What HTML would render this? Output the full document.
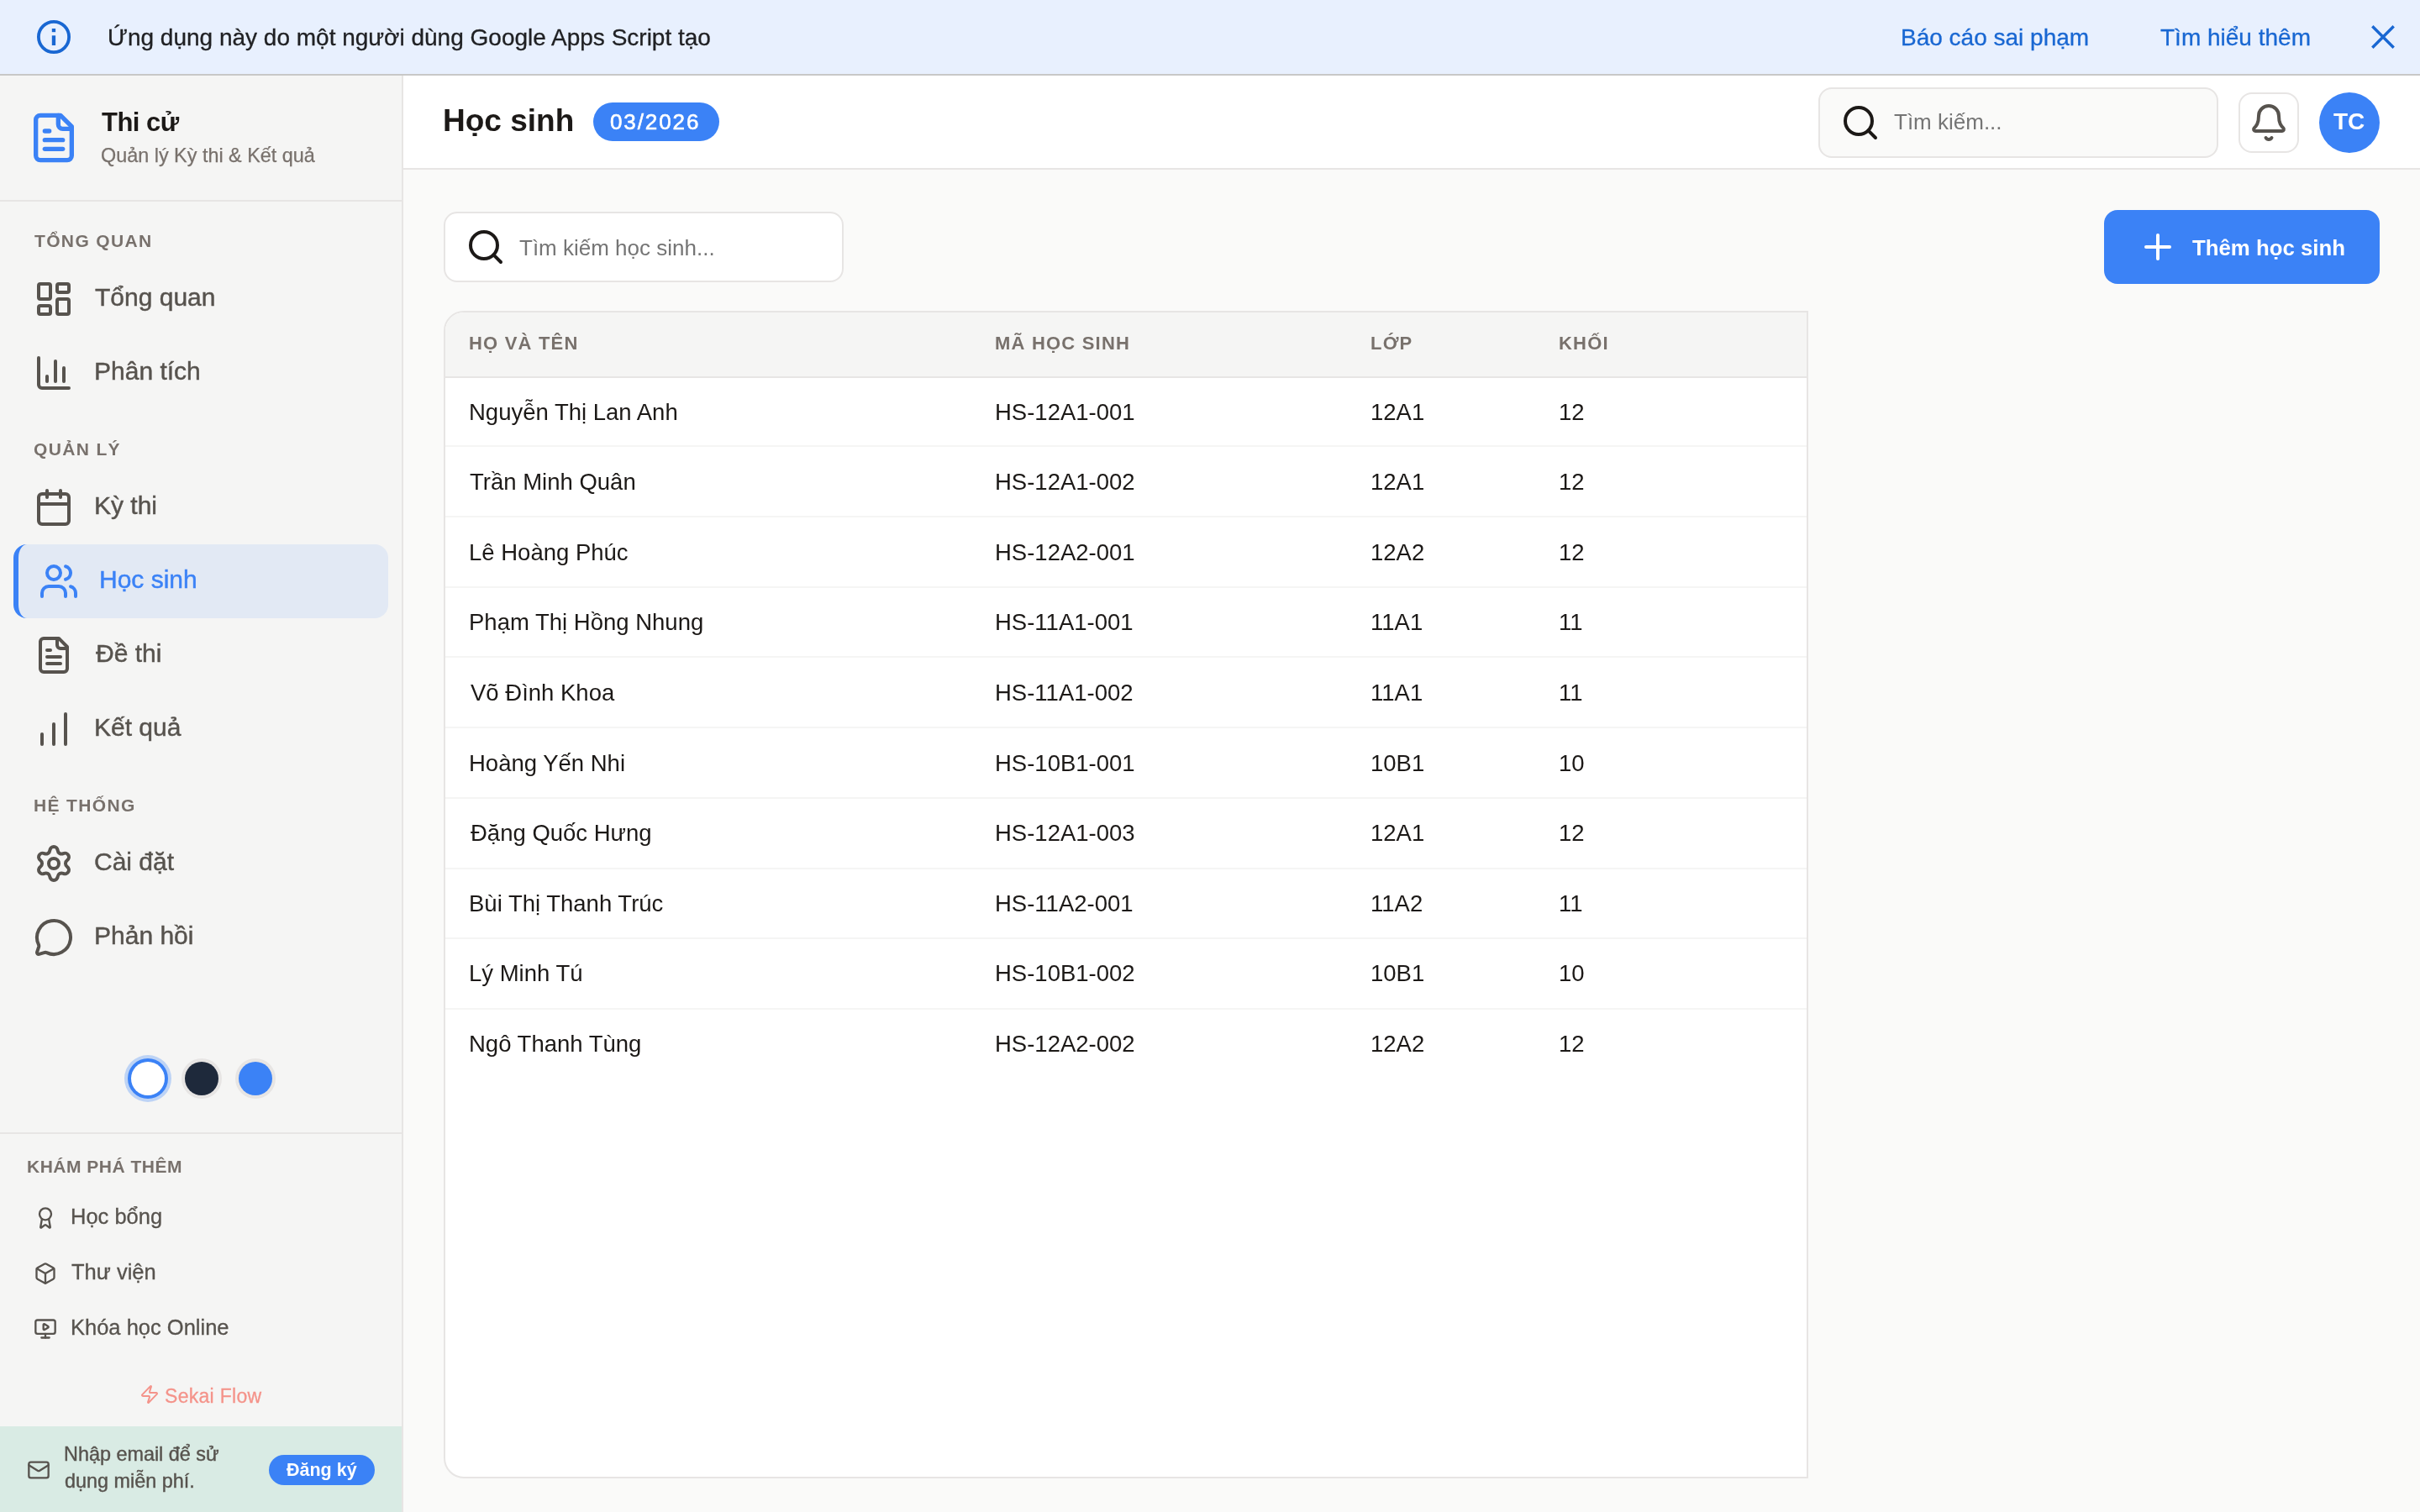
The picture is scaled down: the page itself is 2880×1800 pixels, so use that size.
<!DOCTYPE html>
<html><head><meta charset="utf-8"><style>
html,body{margin:0;padding:0;width:2880px;height:1800px;overflow:hidden;background:#fafaf9}
@media (max-width:2000px){html{zoom:0.5}}
body{position:relative;font-family:"Liberation Sans",sans-serif}
.t{position:absolute;white-space:nowrap;font-family:"Liberation Sans",sans-serif;-webkit-font-smoothing:antialiased;will-change:transform}
</style></head><body>
<div style="position:absolute;left:0px;top:0px;width:2880px;height:88px;background:#e8f0fe"></div>
<div style="position:absolute;left:0px;top:88px;width:2880px;height:2px;background:#c8c8c7"></div>
<div style="position:absolute;left:0px;top:90px;width:478px;height:1710px;background:#f5f5f4"></div>
<div style="position:absolute;left:478px;top:90px;width:2px;height:1710px;background:#e7e5e4"></div>
<div style="position:absolute;left:0px;top:238px;width:478px;height:2px;background:#e7e5e4"></div>
<div style="position:absolute;left:480px;top:90px;width:2400px;height:110px;background:#ffffff"></div>
<div style="position:absolute;left:480px;top:200px;width:2400px;height:2px;background:#e7e5e4"></div>
<div style="position:absolute;left:480px;top:202px;width:2400px;height:1598px;background:#fafaf9"></div>
<svg style="position:absolute;left:40px;top:20px" width="48" height="48" viewBox="0 0 48 48"><circle cx="24" cy="24" r="18.1" fill="none" stroke="#1967d2" stroke-width="3.8"/><rect x="21.8" y="14" width="4.3" height="4.2" fill="#1967d2"/><rect x="21.8" y="22.3" width="4.3" height="11.7" fill="#1967d2"/></svg>
<div class="t" style="left:127.84px;top:31.10px;font-size:28px;line-height:28px;color:#202124;font-weight:400;letter-spacing:0px;-webkit-text-stroke:0.3px #202124;">Ứng dụng này do một người dùng Google Apps Script tạo</div>
<div class="t" style="left:2262.20px;top:30.90px;font-size:28px;line-height:28px;color:#1967d2;font-weight:400;letter-spacing:0px;-webkit-text-stroke:0.3px #1967d2;">Báo cáo sai phạm</div>
<div class="t" style="left:2570.77px;top:30.90px;font-size:28px;line-height:28px;color:#1967d2;font-weight:400;letter-spacing:0px;-webkit-text-stroke:0.3px #1967d2;">Tìm hiểu thêm</div>
<svg style="position:absolute;left:2816px;top:24px" width="40" height="40" viewBox="0 0 40 40"><path d="M7.3 7.3L32.7 32.7M32.7 7.3L7.3 32.7" stroke="#1967d2" stroke-width="3.4" fill="none"/></svg>
<svg style="position:absolute;left:32.00px;top:132.00px" width="64" height="64" viewBox="0 0 24 24" fill="none" stroke="#3b82f6" stroke-width="2" stroke-linecap="round" stroke-linejoin="round" ><path d="M15 2H6a2 2 0 0 0-2 2v16a2 2 0 0 0 2 2h12a2 2 0 0 0 2-2V7Z"/><path d="M14 2v4a2 2 0 0 0 2 2h4"/><path d="M10 9H8"/><path d="M16 13H8"/><path d="M16 17H8"/></svg>
<div class="t" style="left:120.65px;top:130.16px;font-size:31px;line-height:31px;color:#1c1917;font-weight:700;letter-spacing:-0.5px;">Thi cử</div>
<div class="t" style="left:119.89px;top:174.19px;font-size:23.4px;line-height:23.4px;color:#78716c;font-weight:400;letter-spacing:0px;-webkit-text-stroke:0.25px #78716c;">Quản lý Kỳ thi &amp; Kết quả</div>
<div class="t" style="left:40.96px;top:276.42px;font-size:21px;line-height:21px;color:#78716c;font-weight:700;letter-spacing:1.35px;">TỔNG QUAN</div>
<svg style="position:absolute;left:40.00px;top:332.00px" width="48" height="48" viewBox="0 0 24 24" fill="none" stroke="#57534e" stroke-width="2" stroke-linecap="round" stroke-linejoin="round" ><rect width="7" height="9" x="3" y="3" rx="1"/><rect width="7" height="5" x="14" y="3" rx="1"/><rect width="7" height="9" x="14" y="12" rx="1"/><rect width="7" height="5" x="3" y="16" rx="1"/></svg>
<div class="t" style="left:113.33px;top:338.81px;font-size:30px;line-height:30px;color:#57534e;font-weight:400;letter-spacing:0px;-webkit-text-stroke:0.45px #57534e;">Tổng quan</div>
<svg style="position:absolute;left:40.00px;top:420.00px" width="48" height="48" viewBox="0 0 24 24" fill="none" stroke="#57534e" stroke-width="2" stroke-linecap="round" stroke-linejoin="round" ><path d="M3 3v16a2 2 0 0 0 2 2h16"/><path d="M18 17V9"/><path d="M13 17V5"/><path d="M8 17v-3"/></svg>
<div class="t" style="left:111.54px;top:426.81px;font-size:30px;line-height:30px;color:#57534e;font-weight:400;letter-spacing:0px;-webkit-text-stroke:0.45px #57534e;">Phân tích</div>
<div class="t" style="left:39.84px;top:523.92px;font-size:21px;line-height:21px;color:#78716c;font-weight:700;letter-spacing:1.35px;">QUẢN LÝ</div>
<svg style="position:absolute;left:40.00px;top:580.00px" width="48" height="48" viewBox="0 0 24 24" fill="none" stroke="#57534e" stroke-width="2" stroke-linecap="round" stroke-linejoin="round" ><path d="M8 2v4"/><path d="M16 2v4"/><rect width="18" height="18" x="3" y="4" rx="2"/><path d="M3 10h18"/></svg>
<div class="t" style="left:111.54px;top:586.81px;font-size:30px;line-height:30px;color:#57534e;font-weight:400;letter-spacing:0px;-webkit-text-stroke:0.45px #57534e;">Kỳ thi</div>
<div style="position:absolute;left:16px;top:648px;width:446px;height:88px;background:#e2e9f4;border-radius:16px;border-left:6px solid #3b82f6;box-sizing:border-box"></div>
<svg style="position:absolute;left:46.00px;top:668.00px" width="48" height="48" viewBox="0 0 24 24" fill="none" stroke="#3b82f6" stroke-width="2" stroke-linecap="round" stroke-linejoin="round" ><path d="M16 21v-2a4 4 0 0 0-4-4H6a4 4 0 0 0-4 4v2"/><circle cx="9" cy="7" r="4"/><path d="M22 21v-2a4 4 0 0 0-3-3.87"/><path d="M16 3.13a4 4 0 0 1 0 7.75"/></svg>
<div class="t" style="left:117.54px;top:674.81px;font-size:30px;line-height:30px;color:#3b82f6;font-weight:400;letter-spacing:0px;-webkit-text-stroke:0.45px #3b82f6;">Học sinh</div>
<svg style="position:absolute;left:40.00px;top:756.00px" width="48" height="48" viewBox="0 0 24 24" fill="none" stroke="#57534e" stroke-width="2" stroke-linecap="round" stroke-linejoin="round" ><path d="M15 2H6a2 2 0 0 0-2 2v16a2 2 0 0 0 2 2h12a2 2 0 0 0 2-2V7Z"/><path d="M14 2v4a2 2 0 0 0 2 2h4"/><path d="M10 9H8"/><path d="M16 13H8"/><path d="M16 17H8"/></svg>
<div class="t" style="left:113.79px;top:762.81px;font-size:30px;line-height:30px;color:#57534e;font-weight:400;letter-spacing:0px;-webkit-text-stroke:0.45px #57534e;">Đề thi</div>
<svg style="position:absolute;left:40.00px;top:844.00px" width="48" height="48" viewBox="0 0 24 24" fill="none" stroke="#57534e" stroke-width="2" stroke-linecap="round" stroke-linejoin="round" ><path d="M5 21v-6"/><path d="M12 21V9"/><path d="M19 21V3"/></svg>
<div class="t" style="left:111.54px;top:850.81px;font-size:30px;line-height:30px;color:#57534e;font-weight:400;letter-spacing:0px;-webkit-text-stroke:0.45px #57534e;">Kết quả</div>
<div class="t" style="left:39.60px;top:947.82px;font-size:21px;line-height:21px;color:#78716c;font-weight:700;letter-spacing:1.35px;">HỆ THỐNG</div>
<svg style="position:absolute;left:40.00px;top:1004.00px" width="48" height="48" viewBox="0 0 24 24" fill="none" stroke="#57534e" stroke-width="2" stroke-linecap="round" stroke-linejoin="round" ><path d="M9.671 4.136a2.34 2.34 0 0 1 4.659 0 2.34 2.34 0 0 0 3.319 1.915 2.34 2.34 0 0 1 2.33 4.033 2.34 2.34 0 0 0 0 3.831 2.34 2.34 0 0 1-2.33 4.033 2.34 2.34 0 0 0-3.319 1.915 2.34 2.34 0 0 1-4.659 0 2.34 2.34 0 0 0-3.32-1.915 2.34 2.34 0 0 1-2.33-4.033 2.34 2.34 0 0 0 0-3.831A2.34 2.34 0 0 1 6.35 6.051a2.34 2.34 0 0 0 3.319-1.915"/><circle cx="12" cy="12" r="3"/></svg>
<div class="t" style="left:112.48px;top:1010.81px;font-size:30px;line-height:30px;color:#57534e;font-weight:400;letter-spacing:0px;-webkit-text-stroke:0.45px #57534e;">Cài đặt</div>
<svg style="position:absolute;left:40.00px;top:1092.00px" width="48" height="48" viewBox="0 0 24 24" fill="none" stroke="#57534e" stroke-width="2" stroke-linecap="round" stroke-linejoin="round" ><path d="M2.992 16.342a2 2 0 0 1 .094 1.167l-1.065 3.29a1 1 0 0 0 1.236 1.168l3.413-.998a2 2 0 0 1 1.099.092 10 10 0 1 0-4.777-4.719"/></svg>
<div class="t" style="left:111.54px;top:1098.81px;font-size:30px;line-height:30px;color:#57534e;font-weight:400;letter-spacing:0px;-webkit-text-stroke:0.45px #57534e;">Phản hồi</div>
<svg style="position:absolute;left:144px;top:1252px" width="192" height="64" viewBox="0 0 192 64"><circle cx="32" cy="32" r="28" fill="#bdd3f5"/><circle cx="32" cy="32" r="24" fill="#3b82f6"/><circle cx="32" cy="32" r="20" fill="#ffffff"/><circle cx="96" cy="32" r="24" fill="#e7e5e4"/><circle cx="96" cy="32" r="20" fill="#1e293b"/><circle cx="160" cy="32" r="24" fill="#e7e5e4"/><circle cx="160" cy="32" r="20" fill="#3b82f6"/></svg>
<div style="position:absolute;left:0px;top:1348px;width:478px;height:2px;background:#e7e5e4"></div>
<div class="t" style="left:31.80px;top:1378.32px;font-size:21px;line-height:21px;color:#78716c;font-weight:700;letter-spacing:0.5px;">KHÁM PHÁ THÊM</div>
<svg style="position:absolute;left:40.00px;top:1436.00px" width="28" height="28" viewBox="0 0 24 24" fill="none" stroke="#57534e" stroke-width="2" stroke-linecap="round" stroke-linejoin="round" ><path d="m15.477 12.89 1.515 8.526a.5.5 0 0 1-.81.47l-3.58-2.687a1 1 0 0 0-1.197 0l-3.586 2.686a.5.5 0 0 1-.81-.469l1.514-8.526"/><circle cx="12" cy="8" r="6"/></svg>
<div class="t" style="left:83.91px;top:1436.31px;font-size:25.5px;line-height:25.5px;color:#57534e;font-weight:400;letter-spacing:0px;-webkit-text-stroke:0.3px #57534e;">Học bổng</div>
<svg style="position:absolute;left:40.00px;top:1502.00px" width="28" height="28" viewBox="0 0 24 24" fill="none" stroke="#57534e" stroke-width="2" stroke-linecap="round" stroke-linejoin="round" ><path d="M21 8a2 2 0 0 0-1-1.73l-7-4a2 2 0 0 0-2 0l-7 4A2 2 0 0 0 3 8v8a2 2 0 0 0 1 1.73l7 4a2 2 0 0 0 2 0l7-4A2 2 0 0 0 21 16Z"/><path d="m3.3 7 8.7 5 8.7-5"/><path d="M12 22V12"/></svg>
<div class="t" style="left:85.43px;top:1502.31px;font-size:25.5px;line-height:25.5px;color:#57534e;font-weight:400;letter-spacing:0px;-webkit-text-stroke:0.3px #57534e;">Thư viện</div>
<svg style="position:absolute;left:40.00px;top:1568.00px" width="28" height="28" viewBox="0 0 24 24" fill="none" stroke="#57534e" stroke-width="2" stroke-linecap="round" stroke-linejoin="round" ><path d="M10 7.75a.75.75 0 0 1 1.142-.638l3.664 2.249a.75.75 0 0 1 0 1.278l-3.664 2.25a.75.75 0 0 1-1.142-.64z"/><path d="M12 17v4"/><path d="M8 21h8"/><rect x="2" y="3" width="20" height="14" rx="2"/></svg>
<div class="t" style="left:83.91px;top:1568.31px;font-size:25.5px;line-height:25.5px;color:#57534e;font-weight:400;letter-spacing:0px;-webkit-text-stroke:0.3px #57534e;">Khóa học Online</div>
<svg style="position:absolute;left:166.00px;top:1648.00px" width="24" height="24" viewBox="0 0 24 24" fill="none" stroke="#f4938a" stroke-width="2" stroke-linecap="round" stroke-linejoin="round" ><path d="M4 14a1 1 0 0 1-.78-1.63l9.9-10.2a.5.5 0 0 1 .86.46l-1.92 6.02A1 1 0 0 0 13 10h7a1 1 0 0 1 .78 1.63l-9.9 10.2a.5.5 0 0 1-.86-.46l1.92-6.02A1 1 0 0 0 11 14z"/></svg>
<div class="t" style="left:195.96px;top:1650.53px;font-size:23px;line-height:23px;color:#f4938a;font-weight:400;letter-spacing:0.3px;-webkit-text-stroke:0.3px #f4938a;">Sekai Flow</div>
<div style="position:absolute;left:0px;top:1698px;width:478px;height:102px;background:#d9ebe4"></div>
<svg style="position:absolute;left:32.00px;top:1736.00px" width="28" height="28" viewBox="0 0 24 24" fill="none" stroke="#57534e" stroke-width="2" stroke-linecap="round" stroke-linejoin="round" ><rect width="20" height="16" x="2" y="4" rx="2"/><path d="m22 7-8.97 5.7a1.94 1.94 0 0 1-2.06 0L2 7"/></svg>
<div class="t" style="left:75.58px;top:1720.19px;font-size:23.4px;line-height:23.4px;color:#57534e;font-weight:400;letter-spacing:0px;-webkit-text-stroke:0.4px #57534e;">Nhập email để sử</div>
<div class="t" style="left:76.52px;top:1751.89px;font-size:23.4px;line-height:23.4px;color:#57534e;font-weight:400;letter-spacing:0px;-webkit-text-stroke:0.4px #57534e;">dụng miễn phí.</div>
<div style="position:absolute;left:320px;top:1732px;width:126px;height:36px;background:#3b82f6;border-radius:18px"></div>
<div class="t" style="left:340.62px;top:1739.60px;font-size:21.5px;line-height:21.5px;color:#ffffff;font-weight:700;letter-spacing:0px;">Đăng ký</div>
<div class="t" style="left:527.02px;top:124.68px;font-size:37px;line-height:37px;color:#1c1917;font-weight:700;letter-spacing:0px;">Học sinh</div>
<div style="position:absolute;left:706px;top:122px;width:150px;height:46px;background:#3b82f6;border-radius:23px"></div>
<div class="t" style="left:726.48px;top:131.99px;font-size:26px;line-height:26px;color:#ffffff;font-weight:400;letter-spacing:1.9px;-webkit-text-stroke:0.6px #ffffff;">03/2026</div>
<div style="position:absolute;left:2164px;top:104px;width:476px;height:84px;background:#fafaf9;border:2px solid #e7e5e4;border-radius:16px;box-sizing:border-box"></div>
<svg style="position:absolute;left:2190.00px;top:121.70px" width="48" height="48" viewBox="0 0 24 24" fill="none" stroke="#1c1917" stroke-width="2" stroke-linecap="round" stroke-linejoin="round" ><circle cx="11" cy="11" r="8"/><path d="m21 21-4.3-4.3"/></svg>
<div class="t" style="left:2254.12px;top:132.49px;font-size:26px;line-height:26px;color:#757575;font-weight:400;letter-spacing:0px;">Tìm kiếm...</div>
<div style="position:absolute;left:2664px;top:110px;width:72px;height:72px;background:#fff;border:2px solid #e7e5e4;border-radius:16px;box-sizing:border-box"></div>
<svg style="position:absolute;left:2676.00px;top:121.60px" width="48" height="48" viewBox="0 0 24 24" fill="none" stroke="#57534e" stroke-width="2" stroke-linecap="round" stroke-linejoin="round" ><path d="M10.268 21a2 2 0 0 0 3.464 0"/><path d="M3.262 15.326A1 1 0 0 0 4 17h16a1 1 0 0 0 .74-1.673C19.41 13.956 18 12.499 18 8A6 6 0 0 0 6 8c0 4.499-1.411 5.956-2.738 7.326"/></svg>
<div style="position:absolute;left:2760px;top:110px;width:72px;height:72px;background:#3b82f6;border-radius:50%"></div>
<div class="t" style="left:2776.69px;top:130.80px;font-size:28px;line-height:28px;color:#ffffff;font-weight:700;letter-spacing:0px;">TC</div>
<div style="position:absolute;left:528px;top:252px;width:476px;height:84px;background:#fff;border:2px solid #e7e5e4;border-radius:16px;box-sizing:border-box"></div>
<svg style="position:absolute;left:554.00px;top:269.80px" width="48" height="48" viewBox="0 0 24 24" fill="none" stroke="#1c1917" stroke-width="2" stroke-linecap="round" stroke-linejoin="round" ><circle cx="11" cy="11" r="8"/><path d="m21 21-4.3-4.3"/></svg>
<div class="t" style="left:618.02px;top:281.99px;font-size:26px;line-height:26px;color:#757575;font-weight:400;letter-spacing:0px;">Tìm kiếm học sinh...</div>
<div style="position:absolute;left:2504px;top:250px;width:328px;height:88px;background:#3b82f6;border-radius:16px"></div>
<svg style="position:absolute;left:2544.00px;top:270.00px" width="48" height="48" viewBox="0 0 24 24" fill="none" stroke="#ffffff" stroke-width="2" stroke-linecap="round" stroke-linejoin="round" ><path d="M5 12h14"/><path d="M12 5v14"/></svg>
<div class="t" style="left:2608.71px;top:283.16px;font-size:25.8px;line-height:25.8px;color:#ffffff;font-weight:700;letter-spacing:0px;">Thêm học sinh</div>
<div style="position:absolute;left:528px;top:370px;width:1624px;height:1390px;background:#fff;border:2px solid #e7e5e4;border-radius:24px 0 0 24px;box-sizing:border-box;overflow:hidden"></div>
<div style="position:absolute;left:530px;top:372px;width:1620px;height:76px;background:#f5f5f4;border-top-left-radius:22px"></div>
<div style="position:absolute;left:530px;top:448px;width:1620px;height:2px;background:#e7e5e4"></div>
<div class="t" style="left:557.53px;top:397.58px;font-size:22px;line-height:22px;color:#78716c;font-weight:700;letter-spacing:1.2px;">HỌ VÀ TÊN</div>
<div class="t" style="left:1184.03px;top:397.58px;font-size:22px;line-height:22px;color:#78716c;font-weight:700;letter-spacing:1.2px;">MÃ HỌC SINH</div>
<div class="t" style="left:1630.53px;top:397.58px;font-size:22px;line-height:22px;color:#78716c;font-weight:700;letter-spacing:1.2px;">LỚP</div>
<div class="t" style="left:1854.53px;top:397.58px;font-size:22px;line-height:22px;color:#78716c;font-weight:700;letter-spacing:1.2px;">KHỐI</div>
<div class="t" style="left:557.54px;top:476.72px;font-size:27.5px;line-height:27.5px;color:#1c1917;font-weight:400;letter-spacing:0px;">Nguyễn Thị Lan Anh</div>
<div class="t" style="left:1184.04px;top:476.72px;font-size:27.5px;line-height:27.5px;color:#1c1917;font-weight:400;letter-spacing:0px;">HS-12A1-001</div>
<div class="t" style="left:1630.71px;top:476.72px;font-size:27.5px;line-height:27.5px;color:#1c1917;font-weight:400;letter-spacing:0px;">12A1</div>
<div class="t" style="left:1854.71px;top:476.72px;font-size:27.5px;line-height:27.5px;color:#1c1917;font-weight:400;letter-spacing:0px;">12</div>
<div style="position:absolute;left:530px;top:530.00px;width:1620px;height:2px;background:#f5f5f4"></div>
<div class="t" style="left:559.18px;top:560.29px;font-size:27.5px;line-height:27.5px;color:#1c1917;font-weight:400;letter-spacing:0px;">Trần Minh Quân</div>
<div class="t" style="left:1184.04px;top:560.29px;font-size:27.5px;line-height:27.5px;color:#1c1917;font-weight:400;letter-spacing:0px;">HS-12A1-002</div>
<div class="t" style="left:1630.71px;top:560.29px;font-size:27.5px;line-height:27.5px;color:#1c1917;font-weight:400;letter-spacing:0px;">12A1</div>
<div class="t" style="left:1854.71px;top:560.29px;font-size:27.5px;line-height:27.5px;color:#1c1917;font-weight:400;letter-spacing:0px;">12</div>
<div style="position:absolute;left:530px;top:613.75px;width:1620px;height:2px;background:#f5f5f4"></div>
<div class="t" style="left:557.54px;top:643.86px;font-size:27.5px;line-height:27.5px;color:#1c1917;font-weight:400;letter-spacing:0px;">Lê Hoàng Phúc</div>
<div class="t" style="left:1184.04px;top:643.86px;font-size:27.5px;line-height:27.5px;color:#1c1917;font-weight:400;letter-spacing:0px;">HS-12A2-001</div>
<div class="t" style="left:1630.71px;top:643.86px;font-size:27.5px;line-height:27.5px;color:#1c1917;font-weight:400;letter-spacing:0px;">12A2</div>
<div class="t" style="left:1854.71px;top:643.86px;font-size:27.5px;line-height:27.5px;color:#1c1917;font-weight:400;letter-spacing:0px;">12</div>
<div style="position:absolute;left:530px;top:697.50px;width:1620px;height:2px;background:#f5f5f4"></div>
<div class="t" style="left:557.54px;top:727.43px;font-size:27.5px;line-height:27.5px;color:#1c1917;font-weight:400;letter-spacing:0px;">Phạm Thị Hồng Nhung</div>
<div class="t" style="left:1184.04px;top:727.43px;font-size:27.5px;line-height:27.5px;color:#1c1917;font-weight:400;letter-spacing:0px;">HS-11A1-001</div>
<div class="t" style="left:1630.71px;top:727.43px;font-size:27.5px;line-height:27.5px;color:#1c1917;font-weight:400;letter-spacing:0px;">11A1</div>
<div class="t" style="left:1854.71px;top:727.43px;font-size:27.5px;line-height:27.5px;color:#1c1917;font-weight:400;letter-spacing:0px;">11</div>
<div style="position:absolute;left:530px;top:781.25px;width:1620px;height:2px;background:#f5f5f4"></div>
<div class="t" style="left:559.68px;top:811.00px;font-size:27.5px;line-height:27.5px;color:#1c1917;font-weight:400;letter-spacing:0px;">Võ Đình Khoa</div>
<div class="t" style="left:1184.04px;top:811.00px;font-size:27.5px;line-height:27.5px;color:#1c1917;font-weight:400;letter-spacing:0px;">HS-11A1-002</div>
<div class="t" style="left:1630.71px;top:811.00px;font-size:27.5px;line-height:27.5px;color:#1c1917;font-weight:400;letter-spacing:0px;">11A1</div>
<div class="t" style="left:1854.71px;top:811.00px;font-size:27.5px;line-height:27.5px;color:#1c1917;font-weight:400;letter-spacing:0px;">11</div>
<div style="position:absolute;left:530px;top:865.00px;width:1620px;height:2px;background:#f5f5f4"></div>
<div class="t" style="left:557.54px;top:894.57px;font-size:27.5px;line-height:27.5px;color:#1c1917;font-weight:400;letter-spacing:0px;">Hoàng Yến Nhi</div>
<div class="t" style="left:1184.04px;top:894.57px;font-size:27.5px;line-height:27.5px;color:#1c1917;font-weight:400;letter-spacing:0px;">HS-10B1-001</div>
<div class="t" style="left:1630.71px;top:894.57px;font-size:27.5px;line-height:27.5px;color:#1c1917;font-weight:400;letter-spacing:0px;">10B1</div>
<div class="t" style="left:1854.71px;top:894.57px;font-size:27.5px;line-height:27.5px;color:#1c1917;font-weight:400;letter-spacing:0px;">10</div>
<div style="position:absolute;left:530px;top:948.75px;width:1620px;height:2px;background:#f5f5f4"></div>
<div class="t" style="left:559.61px;top:978.14px;font-size:27.5px;line-height:27.5px;color:#1c1917;font-weight:400;letter-spacing:0px;">Đặng Quốc Hưng</div>
<div class="t" style="left:1184.04px;top:978.14px;font-size:27.5px;line-height:27.5px;color:#1c1917;font-weight:400;letter-spacing:0px;">HS-12A1-003</div>
<div class="t" style="left:1630.71px;top:978.14px;font-size:27.5px;line-height:27.5px;color:#1c1917;font-weight:400;letter-spacing:0px;">12A1</div>
<div class="t" style="left:1854.71px;top:978.14px;font-size:27.5px;line-height:27.5px;color:#1c1917;font-weight:400;letter-spacing:0px;">12</div>
<div style="position:absolute;left:530px;top:1032.50px;width:1620px;height:2px;background:#f5f5f4"></div>
<div class="t" style="left:557.54px;top:1061.71px;font-size:27.5px;line-height:27.5px;color:#1c1917;font-weight:400;letter-spacing:0px;">Bùi Thị Thanh Trúc</div>
<div class="t" style="left:1184.04px;top:1061.71px;font-size:27.5px;line-height:27.5px;color:#1c1917;font-weight:400;letter-spacing:0px;">HS-11A2-001</div>
<div class="t" style="left:1630.71px;top:1061.71px;font-size:27.5px;line-height:27.5px;color:#1c1917;font-weight:400;letter-spacing:0px;">11A2</div>
<div class="t" style="left:1854.71px;top:1061.71px;font-size:27.5px;line-height:27.5px;color:#1c1917;font-weight:400;letter-spacing:0px;">11</div>
<div style="position:absolute;left:530px;top:1116.25px;width:1620px;height:2px;background:#f5f5f4"></div>
<div class="t" style="left:557.54px;top:1145.28px;font-size:27.5px;line-height:27.5px;color:#1c1917;font-weight:400;letter-spacing:0px;">Lý Minh Tú</div>
<div class="t" style="left:1184.04px;top:1145.28px;font-size:27.5px;line-height:27.5px;color:#1c1917;font-weight:400;letter-spacing:0px;">HS-10B1-002</div>
<div class="t" style="left:1630.71px;top:1145.28px;font-size:27.5px;line-height:27.5px;color:#1c1917;font-weight:400;letter-spacing:0px;">10B1</div>
<div class="t" style="left:1854.71px;top:1145.28px;font-size:27.5px;line-height:27.5px;color:#1c1917;font-weight:400;letter-spacing:0px;">10</div>
<div style="position:absolute;left:530px;top:1200.00px;width:1620px;height:2px;background:#f5f5f4"></div>
<div class="t" style="left:557.54px;top:1228.85px;font-size:27.5px;line-height:27.5px;color:#1c1917;font-weight:400;letter-spacing:0px;">Ngô Thanh Tùng</div>
<div class="t" style="left:1184.04px;top:1228.85px;font-size:27.5px;line-height:27.5px;color:#1c1917;font-weight:400;letter-spacing:0px;">HS-12A2-002</div>
<div class="t" style="left:1630.71px;top:1228.85px;font-size:27.5px;line-height:27.5px;color:#1c1917;font-weight:400;letter-spacing:0px;">12A2</div>
<div class="t" style="left:1854.71px;top:1228.85px;font-size:27.5px;line-height:27.5px;color:#1c1917;font-weight:400;letter-spacing:0px;">12</div>
</body></html>
